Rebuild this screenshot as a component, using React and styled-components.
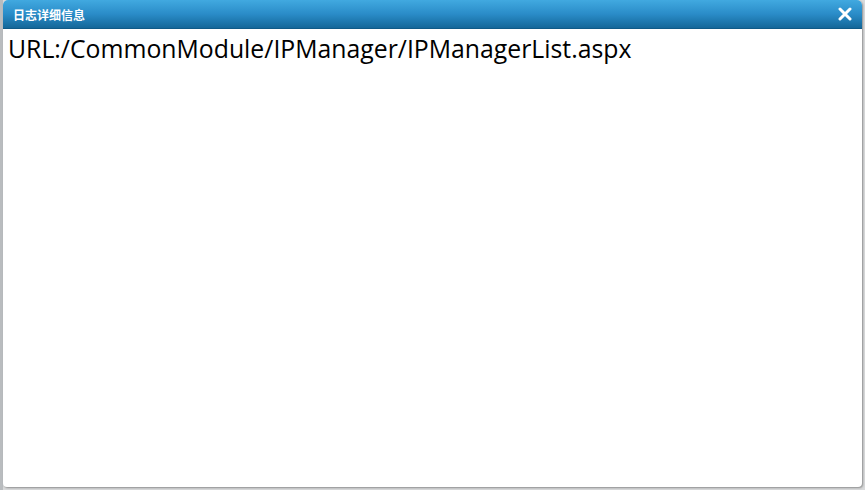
import React from "react";
import styled, { createGlobalStyle } from "styled-components";

const GlobalStyle = createGlobalStyle`
  html, body {
    margin: 0;
    padding: 0;
    background: #d9dadb;
    font-family: "Noto Sans", "Noto Sans CJK SC", sans-serif;
  }
`;

const Page = styled.div`
  width: 865px;
  height: 490px;
  display: flex;
  overflow: hidden;
  background: linear-gradient(to right, #b9bcbf 0, #b9bcbf 3px, #d9dadb 3px);
`;

const Dialog = styled.div`
  margin-left: 3px;
  width: 859px;
  height: 487px;
  display: flex;
  flex-direction: column;
  background: #ffffff;
  border-radius: 5px 5px 4px 4px;
  box-shadow: 1px 1px 2px rgba(0, 0, 0, 0.35);
  overflow: hidden;
`;

const Header = styled.div`
  height: 28px;
  flex-shrink: 0;
  display: flex;
  align-items: center;
  justify-content: space-between;
  padding: 0 10px 0 10px;
  background: linear-gradient(to bottom, #41a9e0 0%, #2a8cc8 50%, #146799 100%);
  border-bottom: 1px solid #0f5a87;
`;

const Title = styled.span`
  color: #ffffff;
  font-size: 12px;
  font-weight: bold;
  font-family: "Noto Sans CJK SC", sans-serif;
`;

const Close = styled.span`
  display: flex;
  align-items: center;
  cursor: pointer;
`;

const Body = styled.div`
  flex: 1;
  padding: 2px 5px;
`;

const Line = styled.div`
  color: #000000;
  font-size: 24.8px;
  font-family: "Open Sans", "Noto Sans", sans-serif;
  line-height: 34px;
`;

export default function App() {
  return (
    <>
      <GlobalStyle />
      <Page>
        <Dialog>
          <Header>
            <Title>日志详细信息</Title>
            <Close>
              <svg width="14" height="14" viewBox="0 0 14 14">
                <path d="M2 2 L12 12 M12 2 L2 12" stroke="#ffffff" strokeWidth="3" strokeLinecap="round" />
              </svg>
            </Close>
          </Header>
          <Body>
            <Line>URL:/CommonModule/IPManager/IPManagerList.aspx</Line>
          </Body>
        </Dialog>
      </Page>
    </>
  );
}
